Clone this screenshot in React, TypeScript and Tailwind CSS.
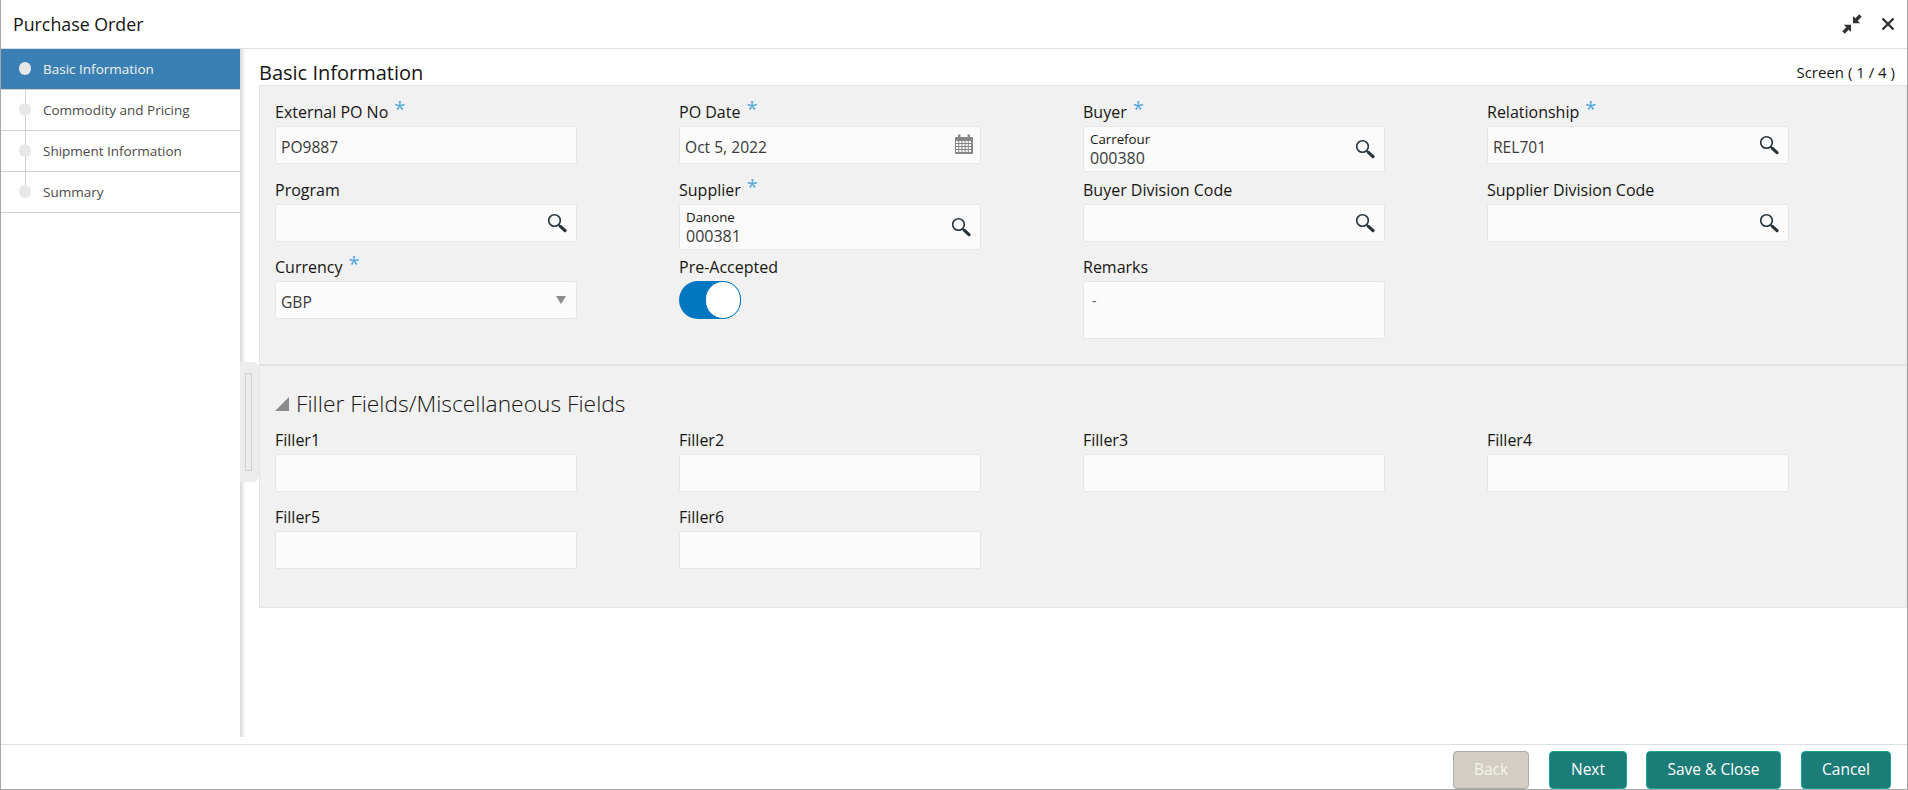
type Field = {
  label: string;
  required?: boolean;
  value?: string;
  sub?: string;
  addon?: 'search' | 'calendar' | 'select';
};

const steps = ['Basic Information', 'Commodity and Pricing', 'Shipment Information', 'Summary'];

function SearchIcon() {
  return (
    <svg width="20" height="20" viewBox="0 0 20 20" fill="none">
      <circle cx="7.5" cy="7.5" r="5.8" stroke="#26323a" strokeWidth="1.6" />
      <path d="M11.8 11.8 L13 13" stroke="#26323a" strokeWidth="1.6" />
      <path d="M13.4 13.4 L18 17.6" stroke="#26323a" strokeWidth="3.2" strokeLinecap="round" />
    </svg>
  );
}

function CalendarIcon() {
  const cells = [];
  for (let r = 0; r < 4; r++) {
    for (let c = 0; c < 5; c++) {
      cells.push(<rect key={`${r}-${c}`} x={2 + c * 3.2} y={7 + r * 3} width="2.2" height="2" fill="#fbfbfb" />);
    }
  }
  return (
    <svg width="20" height="20" viewBox="0 0 20 20">
      <rect x="1" y="3" width="18" height="17" rx="1" fill="#868686" />
      <rect x="4" y="0.5" width="2.4" height="4" fill="#868686" />
      <rect x="13.6" y="0.5" width="2.4" height="4" fill="#868686" />
      {cells}
    </svg>
  );
}

function CollapseIcon() {
  return (
    <svg width="20" height="20" viewBox="0 0 20 20" fill="#2f3336">
      <path d="M11 9.2 L11 2 L13.3 4.3 L17.3 0.3 L19.7 2.7 L15.7 6.7 L18.2 9.2 Z" />
      <path d="M9 10.8 L9 18 L6.7 15.7 L2.7 19.7 L0.3 17.3 L4.3 13.3 L1.8 10.8 Z" />
    </svg>
  );
}

function CloseIcon() {
  return (
    <svg width="14" height="14" viewBox="0 0 14 14" fill="none">
      <path d="M1.5 1.5 L12.5 12.5 M12.5 1.5 L1.5 12.5" stroke="#2f3336" strokeWidth="2.4" />
    </svg>
  );
}

function FieldBox({ field }: { field: Field }) {
  return (
    <div className="flex flex-col items-start">
      <div className="flex h-[26px] items-start text-[16px] leading-[24px] text-[#161513]">
        {field.label}
        {field.required && <span className="ml-[6px] -mt-[1px] text-[20px] leading-[20px] text-[#53a7dd]">*</span>}
      </div>
      <div
        className={`flex w-[302px] items-center justify-between rounded-[2px] border border-[#e6e6e6] bg-[#fbfbfb] pl-[5px] pr-[9px] text-[#3a3a3a] ${
          field.sub ? 'h-[46px]' : 'h-[38px]'
        }`}
      >
        {field.sub ? (
          <div className="flex flex-col pl-[1px]">
            <span className="text-[13.3px] leading-[17px] text-[#161513]">{field.sub}</span>
            <span className="text-[16px] leading-[20px]">{field.value}</span>
          </div>
        ) : (
          <span className="pt-[5px] text-[15.6px]">{field.value}</span>
        )}
        {field.addon === 'search' && <SearchIcon />}
        {field.addon === 'calendar' && (
          <span className="-mr-[3px] -mt-[2px]">
            <CalendarIcon />
          </span>
        )}
        {field.addon === 'select' && (
          <span className="mr-[1px] h-0 w-0 border-x-[5.5px] border-t-[8px] border-x-transparent border-t-[#8c8c8c]" />
        )}
      </div>
    </div>
  );
}

const mainFields: Field[] = [
  { label: 'External PO No', required: true, value: 'PO9887' },
  { label: 'PO Date', required: true, value: 'Oct 5, 2022', addon: 'calendar' },
  { label: 'Buyer', required: true, sub: 'Carrefour', value: '000380', addon: 'search' },
  { label: 'Relationship', required: true, value: 'REL701', addon: 'search' },
  { label: 'Program', addon: 'search' },
  { label: 'Supplier', required: true, sub: 'Danone', value: '000381', addon: 'search' },
  { label: 'Buyer Division Code', addon: 'search' },
  { label: 'Supplier Division Code', addon: 'search' },
  { label: 'Currency', required: true, value: 'GBP', addon: 'select' },
];

const fillers = ['Filler1', 'Filler2', 'Filler3', 'Filler4', 'Filler5', 'Filler6'];

function App() {
  return (
    <div className="flex h-screen flex-col overflow-hidden border-x border-b border-[#a6a6a6] bg-white font-['Open_Sans','Noto_Sans',sans-serif]">
      <header className="flex h-[49px] shrink-0 items-center justify-between border-b border-[#dbe0e5] px-[12px]">
        <h1 className="text-[17.8px] text-[#161513]">Purchase Order</h1>
        <div className="flex items-center gap-[19px]">
          <CollapseIcon />
          <CloseIcon />
        </div>
      </header>

      <div className="relative flex h-[688px] shrink-0">
        <aside className="w-[239px] shrink-0">
          <nav className="relative">
            <div className="absolute bottom-[21px] left-[24px] top-[18px] w-[1px] bg-[#cfd3d6]" />
            {steps.map((step, i) => (
              <div
                key={step}
                className={`relative flex h-[41px] items-center border-b border-[#d3d0cb] pl-[18px] text-[13.5px] ${
                  i === 0 ? 'bg-[#3a80b4] text-[#f2f2f2]' : 'text-[#4a4a4a]'
                }`}
              >
                <span className="mr-[12px] -mt-[2px] h-[13px] w-[12px] rounded-full bg-[#e8e8e8]" />
                <span className="mt-[1px]">{step}</span>
              </div>
            ))}
          </nav>
        </aside>
        <div className="w-[5px] shrink-0 bg-gradient-to-r from-[#d9d9d9] to-[#fafafa]" />

        <div className="absolute left-[239px] top-[313px] flex h-[120px] w-[19px] items-center rounded-r-[6px] bg-[#ececec] pl-[5px]">
          <div className="h-[98px] w-[7px] border border-[#d2d2d2]" />
        </div>

        <main className="min-w-0 flex-1 pl-[14px]">
          <div className="flex h-[36px] items-end justify-between pr-[12px]">
            <h2 className="text-[20px] leading-[24px] text-[#161513]">Basic Information</h2>
            <span className="pb-[3px] text-[15px] leading-[20px] text-[#161513]">Screen ( 1 / 4 )</span>
          </div>

          <section className="h-[523px] border border-[#e4e4e4] bg-[#f1f1f1]">
            <div className="h-[280px] border-b-2 border-[#e2e2e2] pl-[15px] pt-[14px]">
              <div className="grid grid-cols-[302px_302px_302px_302px] grid-rows-[78px_77px_84px] gap-x-[102px]">
                {mainFields.map((f) => (
                  <FieldBox key={f.label} field={f} />
                ))}
                <div className="flex flex-col items-start">
                  <div className="h-[26px] text-[16px] leading-[24px] text-[#161513]">Pre-Accepted</div>
                  <div className="flex h-[38px] w-[62px] justify-end rounded-full bg-[#0077c0]">
                    <div className="h-[38px] w-[36px] rounded-full border border-[#0077c0] bg-white" />
                  </div>
                </div>
                <div className="flex flex-col items-start">
                  <div className="h-[26px] text-[16px] leading-[24px] text-[#161513]">Remarks</div>
                  <div className="h-[58px] w-[302px] rounded-[2px] border border-[#e6e6e6] bg-[#fbfbfb] pl-[8px] pt-[8px] text-[14px] text-[#555]">
                    -
                  </div>
                </div>
              </div>
            </div>

            <div className="pl-[15px]">
              <div className="mb-[10px] mt-[24px] flex h-[28px] items-center gap-[7px]">
                <span className="h-[14px] w-[14px] bg-[#8c8c8c] [clip-path:polygon(100%_0,100%_100%,0_100%)]" />
                <h3 className="text-[22.8px] font-light leading-[28px] text-[#161513]">Filler Fields/Miscellaneous Fields</h3>
              </div>
              <div className="grid grid-cols-[302px_302px_302px_302px] grid-rows-[77px_77px] gap-x-[102px]">
                {fillers.map((label) => (
                  <FieldBox key={label} field={{ label }} />
                ))}
              </div>
            </div>
          </section>
        </main>
      </div>

      <div className="h-[7px] shrink-0" />

      <footer className="flex h-[45px] shrink-0 items-end justify-end border-t border-[#dbe0e5] pr-[16px] text-[15.5px]">
        <button className="h-[38px] w-[76px] rounded-[4px] border border-[#a9a9a9] bg-[#d3cec3] text-[#f5f3ee]">Back</button>
        <button className="ml-[20px] h-[38px] w-[78px] rounded-[4px] border border-[#1fa59c] bg-[#1c7c78] text-white">Next</button>
        <button className="ml-[19px] h-[38px] w-[135px] rounded-[4px] border border-[#1fa59c] bg-[#1c7c78] text-white">Save &amp; Close</button>
        <button className="ml-[20px] h-[38px] w-[90px] rounded-[4px] border border-[#1fa59c] bg-[#1c7c78] text-white">Cancel</button>
      </footer>
    </div>
  );
}

export default App;
